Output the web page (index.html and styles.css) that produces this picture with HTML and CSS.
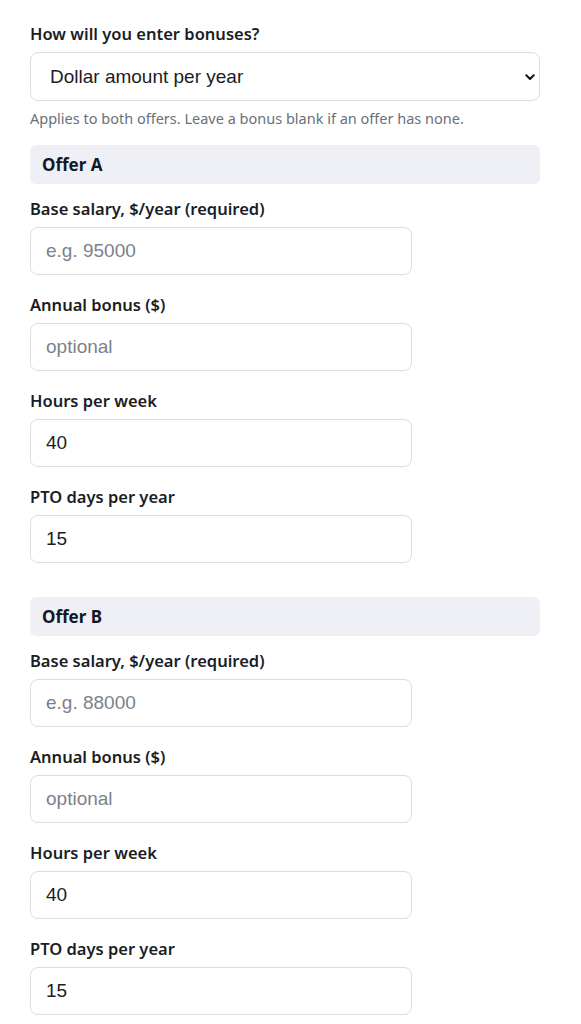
FILE: index.html
```html
<!DOCTYPE html>
<html lang="en">
<head>
  <meta charset="UTF-8">
  <meta name="viewport" content="width=device-width, initial-scale=1.0">
  <title>Compare Job Offers</title>
  <link rel="stylesheet" href="styles.css">
</head>
<body>

  <div class="form">
    <!-- Bonus mode -->
    <label class="top-label" for="bonusMode">How will you enter bonuses?</label>
    <div class="select-wrap">
      <select id="bonusMode" class="select">
        <option>Dollar amount per year</option>
        <option>Percent of base salary</option>
      </select>
      <svg class="chevron" width="10" height="7" viewBox="0 0 10 7">
        <path d="M1.3 1.3 L5 5 L8.7 1.3" fill="none" stroke="#111" stroke-width="2" stroke-linecap="round" stroke-linejoin="round"/>
      </svg>
    </div>
    <p class="hint">Applies to both offers. Leave a bonus blank if an offer has none.</p>

    <!-- Offer A -->
    <section class="offer">
      <div class="offer-head">Offer A</div>
      <div class="field">
        <label for="baseA">Base salary, $/year (required)</label>
        <input id="baseA" type="text" placeholder="e.g. 95000">
      </div>
      <div class="field">
        <label for="bonusA">Annual bonus ($)</label>
        <input id="bonusA" type="text" placeholder="optional">
      </div>
      <div class="field">
        <label for="hoursA">Hours per week</label>
        <input id="hoursA" type="text" value="40">
      </div>
      <div class="field">
        <label for="ptoA">PTO days per year</label>
        <input id="ptoA" type="text" value="15">
      </div>
    </section>

    <!-- Offer B -->
    <section class="offer">
      <div class="offer-head">Offer B</div>
      <div class="field">
        <label for="baseB">Base salary, $/year (required)</label>
        <input id="baseB" type="text" placeholder="e.g. 88000">
      </div>
      <div class="field">
        <label for="bonusB">Annual bonus ($)</label>
        <input id="bonusB" type="text" placeholder="optional">
      </div>
      <div class="field">
        <label for="hoursB">Hours per week</label>
        <input id="hoursB" type="text" value="40">
      </div>
      <div class="field">
        <label for="ptoB">PTO days per year</label>
        <input id="ptoB" type="text" value="15">
      </div>
    </section>
  </div>

</body>
</html>
```

FILE: styles.css
```css
body {
  margin: 0;
  font-family: 'Noto Sans', 'Open Sans', sans-serif;
  color: #1a1d24;
  background: #fff;
}
.form {
  width: 510px;
  padding: 24px 0 0 30px;
}
.top-label {
  display: block;
  font-size: 16.5px;
  font-weight: 600;
  line-height: 20px;
  margin-bottom: 8px;
}
.select-wrap {
  position: relative;
}
.select {
  appearance: none;
  -webkit-appearance: none;
  display: block;
  width: 100%;
  height: 49px;
  padding: 0 19px;
  font-family: 'Liberation Sans', Arial, sans-serif;
  font-size: 19px;
  color: #1a1d24;
  background: #fff;
  border: 1px solid #dcdee5;
  border-radius: 8px;
  outline: none;
}
.chevron {
  position: absolute;
  right: 5px;
  top: 22px;
  pointer-events: none;
}
.hint {
  margin: 8px 0 18px;
  font-size: 14.5px;
  line-height: 18px;
  color: #6b7079;
}
.offer {
  margin-bottom: 34px;
}
.offer-head {
  height: 39px;
  display: flex;
  align-items: center;
  padding: 0 12px;
  background: #eef0f5;
  border-radius: 6px;
  font-size: 17px;
  font-weight: 700;
  color: #111827;
  margin-bottom: 15px;
}
.field {
  margin-bottom: 20px;
}
.field label {
  display: block;
  font-size: 16.5px;
  font-weight: 600;
  line-height: 20px;
  margin-bottom: 8px;
}
.field input {
  display: block;
  box-sizing: border-box;
  width: 382px;
  height: 48px;
  padding: 0 15px;
  font-family: 'Liberation Sans', Arial, sans-serif;
  font-size: 19px;
  color: #1a1d24;
  background: #fff;
  border: 1px solid #dcdee5;
  border-radius: 8px;
  outline: none;
}
.field input::placeholder {
  color: #7d8189;
}
```
